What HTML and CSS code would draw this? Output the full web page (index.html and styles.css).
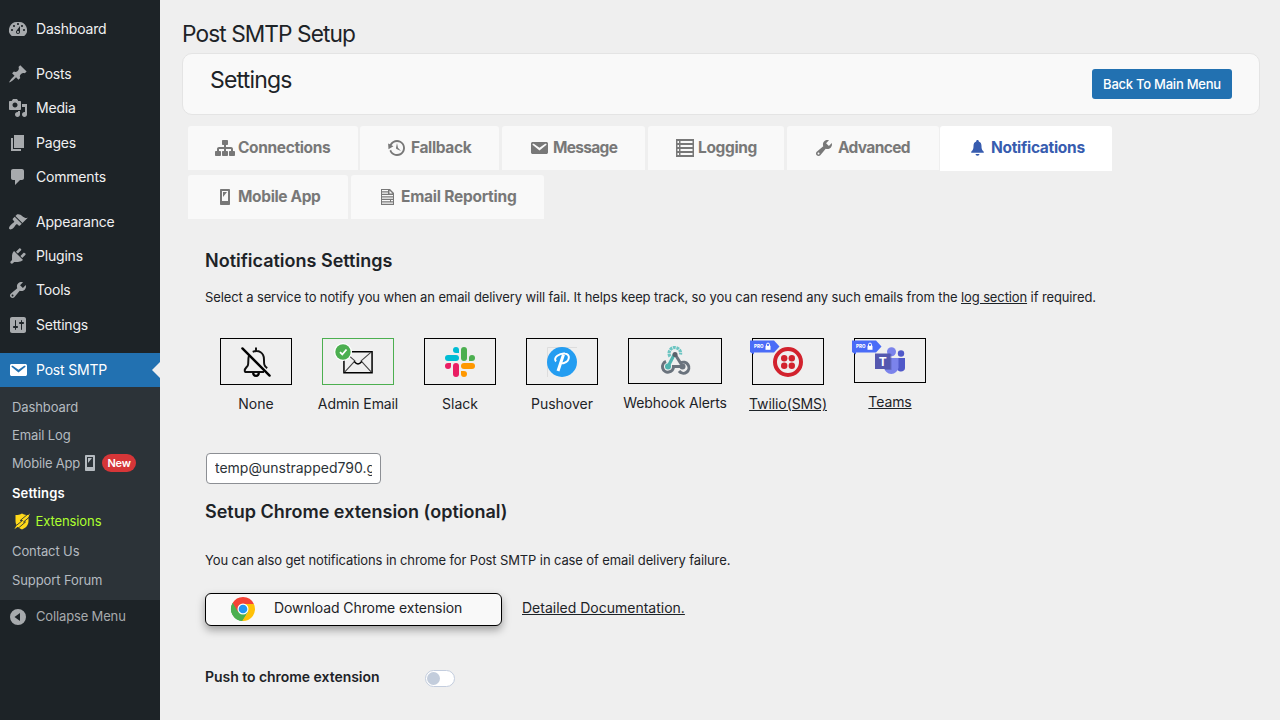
FILE: index.html
```html
<!DOCTYPE html>
<html lang="en">
<head>
<meta charset="utf-8">
<title>Post SMTP Setup</title>
<link rel="stylesheet" href="styles.css">
</head>
<body>
<svg class="defs" width="0" height="0" aria-hidden="true">
  <symbol id="wrench" viewBox="0 0 20 20"><path fill-rule="evenodd" d="M16.68 9.77c-1.34 1.34-3.3 1.67-4.95.99l-5.41 6.52c-.99.99-2.59.99-3.58 0s-.99-2.59 0-3.57l6.52-5.42c-.68-1.65-.35-3.61.99-4.95 1.28-1.28 3.12-1.62 4.72-1.06l-2.89 2.89 2.82 2.82 2.86-2.87c.53 1.58.18 3.39-1.08 4.65zM3.81 16.21c.4.39 1.04.39 1.43 0 .4-.4.4-1.04 0-1.43-.39-.4-1.03-.4-1.43 0-.39.39-.39 1.03 0 1.43z"/></symbol>
  <symbol id="mail" viewBox="0 0 20 20"><path d="M3.87 4h13.25C18.37 4 19 4.59 19 5.79v8.42c0 1.19-.63 1.79-1.88 1.79H3.87c-1.25 0-1.88-.6-1.88-1.79V5.79c0-1.2.63-1.79 1.88-1.79zm6.62 8.6l6.74-5.53c.24-.2.43-.66.13-1.07-.29-.41-.82-.42-1.17-.17l-5.7 3.86L4.8 5.83c-.35-.25-.88-.24-1.17.17-.3.41-.11.87.13 1.07z"/></symbol>
  <symbol id="phone" viewBox="0 0 20 20"><path fill-rule="evenodd" d="M6 2h8c.55 0 1 .45 1 1v14c0 .55-.45 1-1 1H6c-.55 0-1-.45-1-1V3c0-.55.45-1 1-1zm7 12V4H7v10h6zM8 5h4l-4 5V5z"/></symbol>
  <symbol id="ribbon" viewBox="0 0 30 15"><path fill="#4a6cf7" d="M0 0.5H24L29.5 6.5 24 12.5H4V14.5L0 12z"/><path fill="#fff" d="M15.500 5.800h5v4h-5z"/><path fill="none" stroke="#fff" stroke-width="1" d="M16.500 6V4.600a1.500 1.500 0 0 1 3 0V6"/></symbol>
</svg>
<div class="layout">
  <nav class="sidebar">
    <ul class="menu">
      <li class="item"><svg viewBox="0 0 20 20"><path fill-rule="evenodd" d="M3.76 17h12.48A7.998 7.998 0 0 0 10 3a8 8 0 0 0-6.24 14zM10 4c.55 0 1 .45 1 1s-.45 1-1 1-1-.45-1-1 .45-1 1-1zM6 6c.55 0 1 .45 1 1s-.45 1-1 1-1-.45-1-1 .45-1 1-1zm8 0c.55 0 1 .45 1 1s-.45 1-1 1-1-.45-1-1 .45-1 1-1zm-5.37 5.55L12 7v6c0 1.1-.9 2-2 2s-2-.9-2-2c0-.57.24-1.08.63-1.45zM4 10c.55 0 1 .45 1 1s-.45 1-1 1-1-.45-1-1 .45-1 1-1zm12 0c.55 0 1 .45 1 1s-.45 1-1 1-1-.45-1-1 .45-1 1-1zm-5 3c0-.55-.45-1-1-1s-1 .45-1 1 .45 1 1 1 1-.45 1-1z"/></svg><span>Dashboard</span></li>
      <li class="item spaced"><svg viewBox="0 0 20 20"><path d="M10.44 3.02l1.82-1.82 6.36 6.35-1.83 1.82c-1.05-.68-2.48-.57-3.41.36l-.75.75c-.92.93-1.04 2.35-.35 3.41l-1.83 1.82-2.41-2.41-2.8 2.79c-.42.42-3.38 2.71-3.8 2.29s1.86-3.39 2.28-3.81l2.79-2.79L4.1 9.36l1.83-1.82c1.05.69 2.48.57 3.4-.36l.75-.75c.93-.92 1.05-2.35.36-3.41z"/></svg><span>Posts</span></li>
      <li class="item"><svg viewBox="0 0 20 20"><path fill-rule="evenodd" d="M13 11V4c0-.55-.45-1-1-1h-1.67L9 1H5L3.67 3H2c-.55 0-1 .45-1 1v7c0 .55.45 1 1 1h10c.55 0 1-.45 1-1zM7 4.5c1.38 0 2.5 1.12 2.5 2.5S8.38 9.5 7 9.5 4.5 8.38 4.5 7 5.62 4.5 7 4.5zM14 6h5v10.5c0 1.38-1.12 2.5-2.5 2.5S14 17.88 14 16.5s1.12-2.5 2.5-2.5c.17 0 .34.02.5.05V9h-3V6zm-4 8.05V13h2v3.5c0 1.38-1.12 2.5-2.5 2.5S7 17.88 7 16.5 8.12 14 9.5 14c.17 0 .34.02.5.05z"/></svg><span>Media</span></li>
      <li class="item"><svg viewBox="0 0 20 20"><path d="M6 15V2h10v13H6zm-1 1h8v2H3V5h2v11z"/></svg><span>Pages</span></li>
      <li class="item"><svg viewBox="0 0 20 20"><path d="M5 2h9c1.1 0 2 .9 2 2v7c0 1.1-.9 2-2 2h-2l-5 5v-5H5c-1.1 0-2-.9-2-2V4c0-1.1.9-2 2-2z"/></svg><span>Comments</span></li>
      <li class="item spaced"><svg viewBox="0 0 20 20"><path d="M14.48 11.06L7.41 3.99l1.5-1.5c.5-.56 2.3-.47 3.51.32 1.21.8 1.43 1.28 2.91 2.1 1.18.64 2.45 1.26 4.45.85zm-.71.71L6.7 4.7 4.93 6.47c-.39.39-.39 1.02 0 1.41l1.06 1.06c.39.39.39 1.03 0 1.42-.6.6-1.43 1.11-2.21 1.69-.35.26-.7.53-1.01.84C1.43 14.23.4 16.08 1.4 17.07c.99 1 2.84-.03 4.18-1.36.31-.31.58-.66.85-1.02.57-.78 1.08-1.61 1.69-2.21.39-.39 1.02-.39 1.41 0l1.06 1.06c.39.39 1.02.39 1.41 0z"/></svg><span>Appearance</span></li>
      <li class="item"><svg viewBox="0 0 20 20"><path d="M13.11 4.36L9.87 7.6 8 5.73l3.24-3.24c.35-.34 1.05-.2 1.56.32.52.51.66 1.21.31 1.55zm-8 1.77l.91-1.12 9.01 9.01-1.19.84c-.71.71-2.63 1.16-3.82 1.16H6.14L4.9 17.26c-.59.59-1.54.59-2.12 0-.59-.58-.59-1.53 0-2.12l1.24-1.24v-3.88c0-1.13.4-3.19 1.09-3.89zm7.26 3.97l3.24-3.24c.34-.35 1.04-.21 1.55.31.52.51.66 1.21.31 1.55l-3.24 3.25z"/></svg><span>Plugins</span></li>
      <li class="item"><svg><use href="#wrench"/></svg><span>Tools</span></li>
      <li class="item"><svg viewBox="0 0 20 20"><path fill-rule="evenodd" d="M18 16V4c0-1.1-.9-2-2-2H4c-1.1 0-2 .9-2 2v12c0 1.1.9 2 2 2h12c1.1 0 2-.9 2-2zM8 11h1c.55 0 1 .45 1 1s-.45 1-1 1H8v1.5c0 .28-.22.5-.5.5s-.5-.22-.5-.5V13H6c-.55 0-1-.45-1-1s.45-1 1-1h1V5.5c0-.28.22-.5.5-.5s.5.22.5.5V11zm5-2h-1c-.55 0-1-.45-1-1s.45-1 1-1h1V5.5c0-.28.22-.5.5-.5s.5.22.5.5V7h1c.55 0 1 .45 1 1s-.45 1-1 1h-1v5.5c0 .28-.22.5-.5.5s-.5-.22-.5-.5V9z"/></svg><span>Settings</span></li>
      <li class="item spaced current"><svg><use href="#mail"/></svg><span>Post SMTP</span></li>
    </ul>
    <ul class="submenu">
      <li>Dashboard</li>
      <li>Email Log</li>
      <li class="mobile">Mobile App<svg class="sub-phone"><use href="#phone"/></svg><span class="badge">New</span></li>
      <li class="active">Settings</li>
      <li class="ext"><svg class="shield" viewBox="0 0 16 17"><path fill="#ffd91a" d="M8 .5C10 1.600 12 2 14.500 2V8c0 4-2.500 7-6.500 8.500C4 15 1.500 12 1.500 8V2C4 2 6 1.600 8 .5z"/><path stroke="#2c3338" stroke-width=".9" d="M14 1L6.200 7.500H8.500L1 13.500M16 3.500L9.500 9H11.500L3.500 15.800" fill="none"/><path fill="#ffd91a" d="M2.500 12.500L.3 16.300 5 13zM12.500 3.500L16 .5 14.300 4z"/></svg>Extensions</li>
      <li class="contact">Contact Us</li>
      <li class="support">Support Forum</li>
    </ul>
    <div class="item collapse"><svg viewBox="0 0 20 20"><path fill-rule="evenodd" d="M10 2a8 8 0 1 1 0 16 8 8 0 0 1 0-16zm2 4L6.500 10l5.500 4z"/></svg><span>Collapse Menu</span></div>
  </nav>
  <main class="content">
    <h1 class="page-title">Post SMTP Setup</h1>
    <header class="panel"><h2 class="panel-title">Settings</h2><a class="back">Back To Main Menu</a></header>
    <div class="tabs">
      <a class="tab t-conn"><svg viewBox="0 0 20 20"><path d="M18 13h1c.55 0 1 .45 1 1.01v2.98c0 .56-.45 1.01-1 1.01h-4c-.55 0-1-.45-1-1.01v-2.98c0-.56.45-1.01 1-1.01h1v-2h-5v2h1c.55 0 1 .45 1 1.01v2.98c0 .56-.45 1.01-1 1.01H8c-.55 0-1-.45-1-1.01v-2.98c0-.56.45-1.01 1-1.01h1v-2H4v2h1c.55 0 1 .45 1 1.01v2.98C6 17.55 5.55 18 5 18H1c-.55 0-1-.45-1-1.01v-2.98C0 13.450.450 13 1 13h1v-2c0-1.100.900-2 2-2h5V7H8c-.55 0-1-.45-1-1.010V3.010C7 2.450 7.450 2 8 2h4c.55 0 1 .45 1 1.010v2.980C13 6.550 12.550 7 12 7h-1v2h5c1.100 0 2 .9 2 2v2z"/></svg><span>Connections</span></a>
      <a class="tab t-fall"><svg viewBox="0 0 20 20"><path d="M13.65 2.88c3.93 2.01 5.48 6.84 3.47 10.77s-6.83 5.48-10.77 3.47c-1.87-.96-3.2-2.56-3.86-4.4l1.64-1.03c.45 1.57 1.52 2.95 3.08 3.76 3.01 1.54 6.69.35 8.23-2.66 1.55-3.01.36-6.69-2.65-8.24C9.78 3.01 6.1 4.2 4.56 7.21l1.88.97-4.95 3.08-.39-5.82 1.78.91C4.9 2.4 9.75.89 13.65 2.88zm-4.36 7.83C9.11 10.53 9 10.28 9 10c0-.07.03-.12.04-.19h-.01L10 5l.97 4.81L14 13l-4.5-2.12.02-.02c-.08-.04-.16-.09-.23-.15z"/></svg><span>Fallback</span></a>
      <a class="tab t-msg"><svg><use href="#mail"/></svg><span>Message</span></a>
      <a class="tab t-log"><svg viewBox="0 0 20 20"><path fill-rule="evenodd" d="M1 1h18v18H1zM2.500 3v2H4V3zM5.500 3v2h12V3zM2.500 7v2H4V7zM5.500 7v2h12V7zM2.500 11v2H4v-2zM5.500 11v2h12v-2zM2.500 15v2H4v-2zM5.500 15v2h12v-2z"/></svg><span>Logging</span></a>
      <a class="tab t-adv"><svg><use href="#wrench"/></svg><span>Advanced</span></a>
      <a class="tab t-note selected"><svg viewBox="0 0 20 20"><path d="M10.500 2c.9 0 1.300.6 1.300 1.400 1.900.6 2.700 2.200 2.700 4.500 0 3.600 1 4.300 2.300 5.800v1H4.200v-1c1.300-1.500 2.300-2.200 2.300-5.800 0-2.300.8-3.900 2.700-4.500 0-.8.4-1.400 1.300-1.400zM8.500 16h4a2 1.800 0 0 1-4 0z"/></svg><span>Notifications</span></a>
      <a class="tab t-mob"><svg><use href="#phone"/></svg><span>Mobile App</span></a>
      <a class="tab t-rep"><svg viewBox="0 0 20 20"><path fill-rule="evenodd" d="M3 2h9l4 4v12H3zM4 3v1.200h6V3zM11.500 3.500v3h3zM4 5.500v1.200h6V5.500zM4 8v1.200h11V8zM4 10.500v1.200h11v-1.200zM4 13v1.200h8V13zM4 15.500v1.200h11v-1.200zM13 13v1.200h2V13z"/></svg><span>Email Reporting</span></a>
    </div>
    <section class="body">
      <h3 class="heading">Notifications Settings</h3>
      <p class="para intro">Select a service to notify you when an email delivery will fail. It helps keep track, so you can resend any such emails from the <u>log section</u> if required.</p>
      <div class="services">
        <div class="service"><div class="box"><svg class="line" viewBox="0 0 32 32" stroke="#000" stroke-width="2.100"><path d="M16 0.500v3.500M8.500 9C7.200 13 8.300 17 7.300 19.500 6.500 21.500 4 22.500 4 25c0 1 .5 1.700 1.500 1.700h19M12.500 5.200C19 2.500 24.500 6.500 24.500 13c0 5 0 7.500 3.500 9.500" stroke="#111"/><path d="M13 27.500c0 4.300 6 4.300 6 0" stroke-width="2.400"/><path d="M1.500 1.500L30.500 30.500" stroke-width="2.500" stroke-linecap="round"/></svg></div><span>None</span></div>
        <div class="service chosen"><div class="box"><svg class="line" viewBox="0 0 32 32" stroke="#000"><path stroke-width="1.600" d="M1 5h30v22.500H1z"/><path stroke="#444" stroke-width="1.200" d="M2 5.500L13 15M30 5.500L19 15M2 26.500L12.500 15M30 26.500L19.500 15"/><path stroke-width="1.600" d="M12 15.500C15 19 17 19 20 15.500"/></svg><svg class="check" viewBox="0 0 18 18"><circle cx="9" cy="9" r="9" fill="#fff"/><circle cx="9" cy="9" r="7.700" fill="#4caf50"/><path d="M6 9.200l2.300 2.300L12.500 6.500" fill="none" stroke="#fff" stroke-width="1.800"/></svg></div><span class="snug">Admin Email</span></div>
        <div class="service"><div class="box"><svg viewBox="0 0 30 30"><g stroke-width="6" stroke-linecap="round"><path stroke="#00bcd4" d="M3 11h8"/><path stroke="#4caf50" d="M19 3v8"/><path stroke="#ff9800" d="M19 19h8"/><path stroke="#e91e63" d="M11 19v8"/></g><path fill="#00bcd4" d="M14 6H11a3 3 0 1 1 3-3z"/><path fill="#4caf50" d="M24 14v-3a3 3 0 1 1 3 3z"/><path fill="#ff9800" d="M16 24h3a3 3 0 1 1-3 3z"/><path fill="#e91e63" d="M6 16v3a3 3 0 1 1-3-3z"/></svg></div><span>Slack</span></div>
        <div class="service"><div class="box"><svg viewBox="0 0 30 30"><path d="M.5 30V.5H30" fill="none" stroke="#ddd"/><circle cx="15" cy="15" r="15" fill="#249df1"/><path fill="none" stroke="#fff" stroke-width="3" d="M16.500 7.500L11 24"/><path fill="none" stroke="#fff" stroke-width="2" d="M9 14.500C5.500 10.500 13 5.800 18 6.500c6 .7 4.500 8-1 9.500-1 .4-2 .4-2.500 0"/></svg></div><span>Pushover</span></div>
        <div class="service wide"><div class="box"><svg class="line" viewBox="0 0 30 30" stroke-width="3"><path stroke="#6cc5c2" stroke-width="3.200" stroke-dasharray="2.800 .7" d="M10 10.500a5.800 5.800 0 1 1 10.500-2"/><path stroke="#4fb3ae" stroke-width="3.200" d="M14 9L8 20.500"/><path stroke="#6a737d" d="M15.500 9L20.500 17a5.500 5.500 0 1 1-1.500 8M6 15.500a5.500 5.500 0 1 0 7.500 5h9"/><circle cx="15" cy="8.500" r="2.500" fill="#59626b" stroke="none"/><circle cx="8" cy="20.500" r="3" fill="#4fb3ae" stroke="none"/><circle cx="22.500" cy="20.500" r="3" fill="#6a737d" stroke="none"/></svg></div><span class="snug">Webhook Alerts</span></div>
        <div class="service pro twilio"><div class="box"><svg viewBox="0 0 30 30"><circle cx="15" cy="15" r="13" fill="none" stroke="#d2222d" stroke-width="4"/><g fill="#d2222d"><circle cx="11.200" cy="11.200" r="3.200"/><circle cx="18.800" cy="11.200" r="3.200"/><circle cx="11.200" cy="18.800" r="3.200"/><circle cx="18.800" cy="18.800" r="3.200"/></g></svg><div class="ribbon"><svg><use href="#ribbon"/></svg><b>PRO</b></div></div><span class="snug">Twilio(SMS)</span></div>
        <div class="service pro teams"><div class="box"><svg viewBox="0 0 30 30"><circle cx="26" cy="7.500" r="3.200" fill="#5059c9"/><path fill="#5059c9" d="M20 12h10v10c0 4-6 5-8 1z"/><circle cx="16.500" cy="5.800" r="4.500" fill="#7b83eb"/><path fill="#7b83eb" d="M9 12h14.500v9.500a7.300 7.300 0 0 1-14.500 0z"/><path fill="#5059a8" opacity=".55" d="M9 8h7.500v16H10z"/><path fill="#5558af" d="M0 7.500h15.500V23H0z"/><text x="7.800" y="19.500" text-anchor="middle" class="t-letter">T</text></svg><div class="ribbon"><svg><use href="#ribbon"/></svg><b>PRO</b></div></div><span class="snug">Teams</span></div>
      </div>
      <input class="email-input" type="text" value="temp@unstrapped790.gmail.com">
      <h3 class="heading second">Setup Chrome extension (optional)</h3>
      <p class="para chrome-note">You can also get notifications in chrome for Post SMTP in case of email delivery failure.</p>
      <div class="actions">
        <a class="download"><svg viewBox="0 0 48 48"><path fill="#4caf50" d="M24 24L3.200 12A24 24 0 0 0 24 48L34 30z"/><path fill="#ffc107" d="M24 14h21.800A24 24 0 0 1 22 48L34 30z"/><path fill="#f44336" d="M24 0a24 24 0 0 1 21.800 14H24L14 30 3.200 12A24 24 0 0 1 24 0z"/><path fill="#4caf50" d="M3.200 12L14.500 31 24 34 30 33 22 48A24 24 0 0 1 3.200 12z"/><circle cx="24" cy="24" r="11" fill="#fff"/><circle cx="24" cy="24" r="8.700" fill="#2196f3"/></svg><span>Download Chrome extension</span></a>
        <u class="docs">Detailed Documentation.</u>
      </div>
      <div class="push"><span class="push-label">Push to chrome extension</span><span class="toggle"></span></div>
    </section>
  </main>
</div>
</body>
</html>
```

FILE: styles.css
```css
* { box-sizing: border-box; }
body { margin: 0; background: #efefef; color: #1d2327; font: 14px/18px Inter, "Liberation Sans", sans-serif; width: 1280px; height: 720px; overflow: hidden; }
ul { list-style: none; margin: 0; padding: 0; }
h1, h2, h3, p { margin: 0; font-weight: 400; }
svg { display: block; flex: none; fill: currentColor; overflow: visible; }
.line { fill: none; }
.defs { position: absolute; }
.layout { display: flex; height: 720px; }
.sidebar { width: 160px; background: #1d2327; flex: none; }
.menu { padding-top: 12px; }
.item { height: 34.300px; display: flex; align-items: center; padding-left: 8px; color: #f0f0f1; letter-spacing: -.2px; }
.item svg { width: 20px; height: 20px; color: #a7aaad; margin-right: 8px; }
.item.spaced { margin-top: 10.600px; }
.item.current { background: #2271b1; color: #fff; position: relative; margin-top: 11px; }
.item.current svg { color: #fff; }
.item.current::after { content: ""; position: absolute; right: 0; top: 9px; border: 8px solid transparent; border-left: 0; border-right-color: #efefef; }
.submenu { background: #2c3338; height: 213px; padding: 6px 0 0 12px; font-size: 13px; letter-spacing: -.1px; color: #b5bbc0; }
.submenu li { height: 28px; display: flex; align-items: center; }
.submenu .active { color: #fff; font-weight: 600; height: 31px; letter-spacing: .15px; }
.submenu .mobile { letter-spacing: -.18px; }
.submenu .ext { color: #adff2f; height: 26px; }
.submenu .contact { height: 33px; }
.submenu .support { height: 26px; }
.sub-phone { width: 20px; height: 20px; margin: 0 2px 0 0; }
.badge { background: #d63638; color: #fff; font-size: 11px; font-weight: 600; height: 18px; border-radius: 9px; width: 34px; text-align: center; letter-spacing: -.2px; }
.shield { width: 16px; height: 17px; margin: 0 5.500px 0 2px; }
.collapse { color: #a7aaad; font-size: 13px; letter-spacing: -.15px; height: 33px; }
.collapse span { margin-top: -1px; }
.content { flex: 1; padding: 19px 20px 0 22px; }
.page-title { font-size: 22.700px; line-height: 30px; letter-spacing: -.92px; }
.panel { margin-top: 4px; width: 1078px; height: 62px; border: 1px solid #e4e4e4; border-radius: 10px; background: #f9f9f9; display: flex; justify-content: space-between; padding: 14px 27px; }
.panel-title { font-size: 23px; line-height: 24px; letter-spacing: -.8px; }
.back { width: 140px; height: 30px; margin-top: 1px; border-radius: 3px; background: #2271b1; color: #fff; font-size: 13px; font-weight: 500; letter-spacing: -.24px; display: flex; align-items: center; justify-content: center; }
.tabs { display: flex; flex-wrap: wrap; width: 960px; row-gap: 4px; margin: 11px 0 0 6px; }
.tab { height: 44px; display: flex; align-items: center; background: #f9f9f9; color: #787878; border-radius: 3px 3px 0 0; font-size: 15.500px; font-weight: 700; letter-spacing: -.36px; padding-left: 26.500px; }
.tab svg { width: 20px; height: 20px; margin-right: 3.500px; }
.t-conn { width: 170px; margin-right: 2px; }
.t-fall { width: 139px; margin-right: 3px; }
.t-fall svg, .t-adv svg, .t-note svg { margin-right: 4.500px; }
.t-msg { width: 143px; margin-right: 3px; letter-spacing: -.7px; }
.t-msg svg { margin-right: 4.500px; }
.t-log { width: 136px; margin-right: 3px; }
.t-adv { width: 152px; margin-right: 1px; letter-spacing: -.65px; }
.t-note { width: 172px; letter-spacing: -.3px; padding-bottom: 1px; }
.t-mob { width: 160px; margin-right: 3px; }
.t-rep { width: 193px; letter-spacing: -.24px; }
.tab.selected { background: #fff; color: #375caf; height: 45px; }
.body { padding-left: 23px; }
.heading { margin-top: 30px; font-size: 18px; font-weight: 600; line-height: 24px; letter-spacing: 0; }
.para { font-size: 13px; line-height: 20px; letter-spacing: -.115px; }
.intro { margin-top: 14px; white-space: nowrap; }
.services { display: flex; margin: 31px 0 0 15px; gap: 30px; height: 80px; }
.service { width: 72px; display: flex; flex-direction: column; align-items: center; }
.box { width: 72px; height: 47px; border: 1px solid #000; display: flex; align-items: center; justify-content: center; position: relative; flex: none; }
.box > svg { width: 30px; height: 30px; }
.service > span { margin-top: 10px; white-space: nowrap; line-height: 18px; }
.service > .snug { letter-spacing: -.1px; }
.wide, .wide .box { width: 94px; }
.wide .box { height: 46px; }
.chosen .box { border-color: #4caf50; }
.box > .check { position: absolute; left: 11px; top: 4px; width: 18px; height: 18px; }
.pro > span { text-decoration: underline; }
.teams .box { height: 45px; }
.ribbon { position: absolute; left: -3px; top: 1px; width: 30px; height: 15px; }
.ribbon svg { width: 30px; height: 15px; }
.ribbon b { position: absolute; left: 4px; top: 3px; color: #fff; font-size: 4.500px; line-height: 8px; font-weight: 800; }
.t-letter { fill: #fff; font: 700 12px Inter, sans-serif; }
.email-input { display: block; margin: 35px 0 0 1px; width: 175px; height: 31px; border: 1px solid #8c8f94; border-radius: 4px; background: #fff; padding: 0 8px 2px; color: #2c3338; font: inherit; }
.second { margin-top: 16px; }
.chrome-note { margin-top: 26px; }
.actions { display: flex; margin-top: 23px; }
.download { width: 297px; height: 33px; border: 1px solid #000; border-radius: 6px; background: #f9f9f9; box-shadow: 0 4px 8px rgba(0,0,0,.35); display: flex; align-items: center; padding-left: 25px; letter-spacing: -.1px; }
.download svg { width: 24px; height: 24px; margin: -1px 19px 0 0; }
.download span { margin-top: -3px; }
.docs { margin: 6px 0 0 20px; }
.push { display: flex; align-items: center; margin-top: 40px; }
.push-label { font-weight: 600; width: 220px; letter-spacing: -.04px; }
.toggle { width: 30px; height: 17px; border: 1px solid #c3cdde; border-radius: 9px; background: #fff; padding: 1px; margin-top: 4px; }
.toggle::before { content: ""; display: block; width: 13px; height: 13px; border-radius: 50%; background: #c3cddc; }
```
